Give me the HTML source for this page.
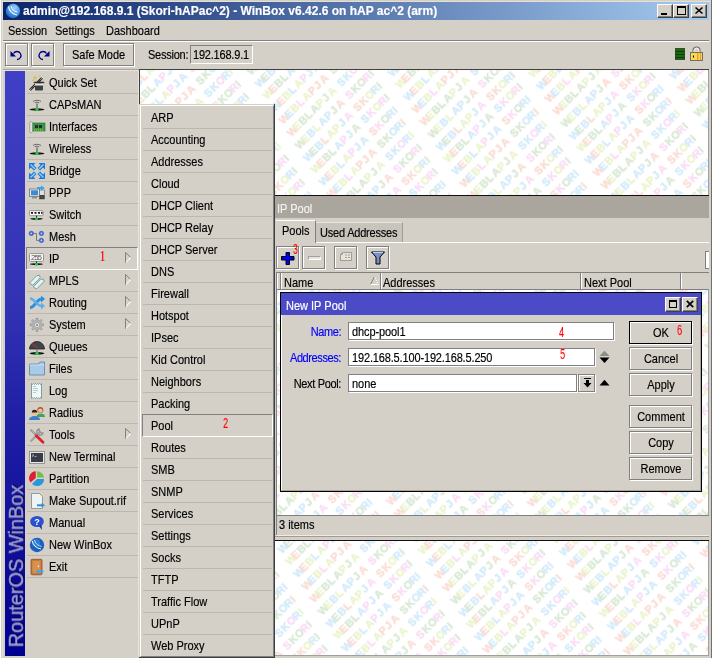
<!DOCTYPE html><html><head><meta charset="utf-8"><style>
html,body{margin:0;padding:0}
body{width:712px;height:658px;position:relative;overflow:hidden;background:#d4d0c8;font-family:"Liberation Sans",sans-serif;font-size:11px;color:#000}
.t{position:absolute;white-space:nowrap;line-height:13px;will-change:transform;-webkit-text-stroke:0.15px currentColor;transform-origin:0 2.4px;transform:scaleY(1.12)}
svg{position:absolute;overflow:visible}
</style></head><body>
<div style="position:absolute;left:0px;top:0px;width:1px;height:658px;background:#fff"></div>
<div style="position:absolute;left:2px;top:1px;width:709px;height:1px;background:#e4e0d4"></div>
<div style="position:absolute;left:2px;top:1px;width:1px;height:657px;background:#e4e0d4"></div>
<div style="position:absolute;left:711px;top:0px;width:1px;height:658px;background:#707070"></div>
<div style="position:absolute;left:3px;top:2px;width:706px;height:18px;background:linear-gradient(to right,#0a246a,#a6caf0)"></div>
<svg style="left:5px;top:3px" width="16" height="16" viewBox="0 0 16 16"><defs><radialGradient id="lg" cx="0.6" cy="0.3" r="0.8"><stop offset="0" stop-color="#9fd0ff"/><stop offset="0.6" stop-color="#3a8ee0"/><stop offset="1" stop-color="#1a5cb0"/></radialGradient></defs><circle cx="8" cy="8" r="7.2" fill="url(#lg)"/><path d="M3.5 3.5 Q4.5 10 12 12" stroke="#fff" stroke-width="1.2" fill="none"/><path d="M6 3 Q7 8 12.5 9.2" stroke="#fff" stroke-width="1" fill="none"/></svg>
<div class="t" style="left:23px;top:3px;color:#fff;font-weight:bold;font-size:12px;line-height:14px">admin@192.168.9.1 (Skori-hAPac^2) - WinBox v6.42.6 on hAP ac^2 (arm)</div>
<div style="position:absolute;left:657px;top:4px;width:16px;height:14px;box-sizing:border-box;background:#d4d0c8;border-top:1px solid #fff;border-left:1px solid #fff;border-right:1px solid #404040;border-bottom:1px solid #404040;box-shadow:inset -1px -1px 0 #808080"></div>
<div style="position:absolute;left:673px;top:4px;width:16px;height:14px;box-sizing:border-box;background:#d4d0c8;border-top:1px solid #fff;border-left:1px solid #fff;border-right:1px solid #404040;border-bottom:1px solid #404040;box-shadow:inset -1px -1px 0 #808080"></div>
<div style="position:absolute;left:691px;top:4px;width:16px;height:14px;box-sizing:border-box;background:#d4d0c8;border-top:1px solid #fff;border-left:1px solid #fff;border-right:1px solid #404040;border-bottom:1px solid #404040;box-shadow:inset -1px -1px 0 #808080"></div>
<div style="position:absolute;left:661px;top:13px;width:6px;height:2px;background:#000"></div>
<div style="position:absolute;left:677px;top:6px;width:9px;height:9px;box-sizing:border-box;border:1px solid #000;border-top-width:2px"></div>
<svg style="left:695px;top:7px" width="8" height="7" viewBox="0 0 8 7"><path d="M0.5 0.5 L7.5 6.5 M7.5 0.5 L0.5 6.5" stroke="#000" stroke-width="1.6"/></svg>
<div class="t" style="left:8px;top:24px;">Session</div>
<div class="t" style="left:55px;top:24px;">Settings</div>
<div class="t" style="left:106px;top:24px;">Dashboard</div>
<div style="position:absolute;left:3px;top:40px;width:706px;height:1px;background:#808080"></div>
<div style="position:absolute;left:3px;top:41px;width:706px;height:1px;background:#fff"></div>
<div style="position:absolute;left:6px;top:44px;width:23px;height:23px;border:1px solid #fff;box-sizing:border-box;"></div>
<div style="position:absolute;left:5px;top:43px;width:23px;height:23px;border:1px solid #808080;box-sizing:border-box;"></div>
<div style="position:absolute;left:32px;top:44px;width:23px;height:23px;border:1px solid #fff;box-sizing:border-box;"></div>
<div style="position:absolute;left:31px;top:43px;width:23px;height:23px;border:1px solid #808080;box-sizing:border-box;"></div>
<svg style="left:10px;top:49px" width="14" height="12" viewBox="0 0 14 12"><path d="M3.5 4.5 A4 4 0 1 1 7 10.5" stroke="#00008c" stroke-width="1.3" fill="none"/><path d="M0.5 2 L0.5 7.5 L6 7.5 Z" fill="#00008c"/></svg>
<svg style="left:36px;top:49px" width="14" height="12" viewBox="0 0 14 12"><path d="M10.5 4.5 A4 4 0 1 0 7 10.5" stroke="#00008c" stroke-width="1.3" fill="none"/><path d="M13.5 2 L13.5 7.5 L8 7.5 Z" fill="#00008c"/></svg>
<div style="position:absolute;left:64px;top:44px;width:71px;height:23px;border:1px solid #fff;box-sizing:border-box;"></div>
<div style="position:absolute;left:63px;top:43px;width:71px;height:23px;border:1px solid #808080;box-sizing:border-box;"></div>
<div class="t" style="left:72px;top:48px;">Safe Mode</div>
<div class="t" style="left:148px;top:48px;letter-spacing:-0.25px">Session:</div>
<div style="position:absolute;left:190px;top:45px;width:63px;height:19px;box-sizing:border-box;border-top:1px solid #808080;border-left:1px solid #808080;border-right:1px solid #fff;border-bottom:1px solid #fff;"></div>
<div class="t" style="left:193px;top:48px;letter-spacing:-0.2px">192.168.9.1</div>
<div style="position:absolute;left:675px;top:48px;width:10px;height:12px;background:#1e6414;box-shadow:inset 0 0 0 1px #2a5a1a"></div>
<div style="position:absolute;left:675px;top:51px;width:10px;height:1px;background:#0d3d08"></div>
<div style="position:absolute;left:675px;top:54px;width:10px;height:1px;background:#0d3d08"></div>
<div style="position:absolute;left:675px;top:57px;width:10px;height:1px;background:#0d3d08"></div>
<svg style="left:690px;top:46px" width="13" height="15" viewBox="0 0 13 15"><path d="M3 7 V4.5 A3.5 3.5 0 0 1 10 4.5 V7" stroke="#707070" stroke-width="1.2" fill="none"/><path d="M4 7 V4.8 A2.5 2.5 0 0 1 9 4.8 V7" stroke="#fff" stroke-width="0.8" fill="none"/><rect x="0.5" y="6.5" width="12" height="8" fill="#ffd84a" stroke="#707070"/><rect x="7" y="7" width="1.5" height="7" fill="#f0a030"/><rect x="10" y="7" width="1.2" height="7" fill="#f0a030"/><rect x="3" y="9.5" width="1" height="2" fill="#000"/></svg>
<div style="position:absolute;left:3px;top:69px;width:136px;height:1px;background:#a8a49c"></div>
<div style="position:absolute;left:3px;top:70px;width:136px;height:1px;background:#e8e4dc"></div>
<div style="position:absolute;left:5px;top:71px;width:20px;height:585px;background:linear-gradient(to bottom,#4040c6 0%,#3232b4 40%,#1a1aa2 65%,#000090 100%)"></div>
<div class="t" style="left:16px;top:566px;transform-origin:50% 50%;transform:translate(-50%,-50%) rotate(-90deg);font-size:19.9px;line-height:20px;color:#9898cc;-webkit-text-stroke:0.5px #9898cc;text-shadow:1px 1px 1px #000040">RouterOS WinBox</div>
<div style="position:absolute;left:27px;top:93px;width:111px;height:1px;background:#bcb8b0"></div>
<div class="t" style="left:49px;top:76px;">Quick Set</div>
<div style="position:absolute;left:27px;top:115px;width:111px;height:1px;background:#bcb8b0"></div>
<div class="t" style="left:49px;top:98px;">CAPsMAN</div>
<div style="position:absolute;left:27px;top:137px;width:111px;height:1px;background:#bcb8b0"></div>
<div class="t" style="left:49px;top:120px;">Interfaces</div>
<div style="position:absolute;left:27px;top:159px;width:111px;height:1px;background:#bcb8b0"></div>
<div class="t" style="left:49px;top:142px;">Wireless</div>
<div style="position:absolute;left:27px;top:181px;width:111px;height:1px;background:#bcb8b0"></div>
<div class="t" style="left:49px;top:164px;">Bridge</div>
<div style="position:absolute;left:27px;top:203px;width:111px;height:1px;background:#bcb8b0"></div>
<div class="t" style="left:49px;top:186px;">PPP</div>
<div style="position:absolute;left:27px;top:225px;width:111px;height:1px;background:#bcb8b0"></div>
<div class="t" style="left:49px;top:208px;">Switch</div>
<div style="position:absolute;left:27px;top:247px;width:111px;height:1px;background:#bcb8b0"></div>
<div class="t" style="left:49px;top:230px;">Mesh</div>
<div style="position:absolute;left:26px;top:247px;width:112px;height:23px;box-sizing:border-box;border-top:1px solid #808080;border-left:1px solid #808080;border-right:1px solid #fff;border-bottom:1px solid #fff"></div>
<div class="t" style="left:49px;top:252px;">IP</div>
<svg style="left:125px;top:252px" width="7" height="11" viewBox="0 0 7 11"><path d="M0.5 0.5 L5.8 5.5 L0.5 10.5 Z" fill="#d4d0c8" stroke="#808080" stroke-width="1"/><path d="M1 10.3 L5.8 5.5" stroke="#fff" stroke-width="1.1"/></svg>
<div style="position:absolute;left:27px;top:291px;width:111px;height:1px;background:#bcb8b0"></div>
<div class="t" style="left:49px;top:274px;">MPLS</div>
<svg style="left:125px;top:274px" width="7" height="11" viewBox="0 0 7 11"><path d="M0.5 0.5 L5.8 5.5 L0.5 10.5 Z" fill="#d4d0c8" stroke="#808080" stroke-width="1"/><path d="M1 10.3 L5.8 5.5" stroke="#fff" stroke-width="1.1"/></svg>
<div style="position:absolute;left:27px;top:313px;width:111px;height:1px;background:#bcb8b0"></div>
<div class="t" style="left:49px;top:296px;">Routing</div>
<svg style="left:125px;top:296px" width="7" height="11" viewBox="0 0 7 11"><path d="M0.5 0.5 L5.8 5.5 L0.5 10.5 Z" fill="#d4d0c8" stroke="#808080" stroke-width="1"/><path d="M1 10.3 L5.8 5.5" stroke="#fff" stroke-width="1.1"/></svg>
<div style="position:absolute;left:27px;top:335px;width:111px;height:1px;background:#bcb8b0"></div>
<div class="t" style="left:49px;top:318px;">System</div>
<svg style="left:125px;top:318px" width="7" height="11" viewBox="0 0 7 11"><path d="M0.5 0.5 L5.8 5.5 L0.5 10.5 Z" fill="#d4d0c8" stroke="#808080" stroke-width="1"/><path d="M1 10.3 L5.8 5.5" stroke="#fff" stroke-width="1.1"/></svg>
<div style="position:absolute;left:27px;top:357px;width:111px;height:1px;background:#bcb8b0"></div>
<div class="t" style="left:49px;top:340px;">Queues</div>
<div style="position:absolute;left:27px;top:379px;width:111px;height:1px;background:#bcb8b0"></div>
<div class="t" style="left:49px;top:362px;">Files</div>
<div style="position:absolute;left:27px;top:401px;width:111px;height:1px;background:#bcb8b0"></div>
<div class="t" style="left:49px;top:384px;">Log</div>
<div style="position:absolute;left:27px;top:423px;width:111px;height:1px;background:#bcb8b0"></div>
<div class="t" style="left:49px;top:406px;">Radius</div>
<div style="position:absolute;left:27px;top:445px;width:111px;height:1px;background:#bcb8b0"></div>
<div class="t" style="left:49px;top:428px;">Tools</div>
<svg style="left:125px;top:428px" width="7" height="11" viewBox="0 0 7 11"><path d="M0.5 0.5 L5.8 5.5 L0.5 10.5 Z" fill="#d4d0c8" stroke="#808080" stroke-width="1"/><path d="M1 10.3 L5.8 5.5" stroke="#fff" stroke-width="1.1"/></svg>
<div style="position:absolute;left:27px;top:467px;width:111px;height:1px;background:#bcb8b0"></div>
<div class="t" style="left:49px;top:450px;">New Terminal</div>
<div style="position:absolute;left:27px;top:489px;width:111px;height:1px;background:#bcb8b0"></div>
<div class="t" style="left:49px;top:472px;">Partition</div>
<div style="position:absolute;left:27px;top:511px;width:111px;height:1px;background:#bcb8b0"></div>
<div class="t" style="left:49px;top:494px;">Make Supout.rif</div>
<div style="position:absolute;left:27px;top:533px;width:111px;height:1px;background:#bcb8b0"></div>
<div class="t" style="left:49px;top:516px;">Manual</div>
<div style="position:absolute;left:27px;top:555px;width:111px;height:1px;background:#bcb8b0"></div>
<div class="t" style="left:49px;top:538px;">New WinBox</div>
<div style="position:absolute;left:27px;top:577px;width:111px;height:1px;background:#bcb8b0"></div>
<div class="t" style="left:49px;top:560px;">Exit</div>
<div class="t" style="left:100px;top:250px;color:#f00;font-family:'Liberation Serif';font-size:14px;line-height:14px;transform:scaleX(0.72);transform-origin:left top;-webkit-text-stroke:0.2px #f00">1</div>
<svg style="left:29px;top:75px" width="16" height="16" viewBox="0 0 16 16"><path d="M1 15 L13 3" stroke="#202020" stroke-width="2.4"/><path d="M1 15 L13 3" stroke="#fff" stroke-width="0.8" stroke-dasharray="1 1"/><rect x="6" y="7.5" width="8" height="8" rx="1" fill="#404040"/><rect x="6" y="7.5" width="8" height="3" fill="#e8e8e8"/><ellipse cx="10" cy="7.5" rx="5.5" ry="0.9" fill="#303030"/><path d="M6 0.5 L6.8 2.2 L8.5 2.5 L6.8 3 L6 4.8 L5.2 3 L3.5 2.5 L5.2 2.2Z" fill="#e0b820"/><circle cx="4.3" cy="5.2" r="1" fill="#e0c030"/><circle cx="10.5" cy="0.8" r="0.7" fill="#e0c030"/><circle cx="14.5" cy="5" r="0.7" fill="#e0c030"/></svg>
<svg style="left:29px;top:97px" width="16" height="16" viewBox="0 0 16 16"><path d="M4 4.5 A5 3 0 0 1 12 4.5" stroke="#606060" stroke-width="0.9" fill="none"/><path d="M5.8 5.8 A3 1.8 0 0 1 10.2 5.8" stroke="#606060" stroke-width="0.9" fill="none"/><rect x="7.3" y="6.5" width="1.4" height="6" fill="#707070"/><ellipse cx="8" cy="12.5" rx="7.5" ry="1.2" fill="#101010"/><circle cx="8" cy="12.5" r="1.7" fill="#1ed040"/></svg>
<svg style="left:29px;top:119px" width="16" height="16" viewBox="0 0 16 16"><rect x="3.5" y="4" width="12.5" height="8" fill="#30a040" stroke="#1a7028" stroke-width="0.6"/><rect x="6" y="6" width="3" height="3" fill="#302838"/><rect x="10" y="6" width="3" height="3" fill="#302838"/><path d="M5 11 h9" stroke="#e8c040" stroke-width="1.2" stroke-dasharray="1 1"/><rect x="0.8" y="2.6" width="2.6" height="11" rx="1" fill="#e8e8e8" stroke="#808080" stroke-width="0.6"/></svg>
<svg style="left:29px;top:141px" width="16" height="16" viewBox="0 0 16 16"><path d="M4 4.5 A5 3 0 0 1 12 4.5" stroke="#606060" stroke-width="0.9" fill="none"/><path d="M5.8 5.8 A3 1.8 0 0 1 10.2 5.8" stroke="#606060" stroke-width="0.9" fill="none"/><rect x="7.3" y="6.5" width="1.4" height="6" fill="#707070"/><ellipse cx="8" cy="12.5" rx="7.5" ry="1.2" fill="#101010"/><circle cx="8" cy="12.5" r="1.7" fill="#1ed040"/></svg>
<svg style="left:29px;top:163px" width="16" height="16" viewBox="0 0 16 16"><g stroke="#1a7ad8" stroke-width="3.6" stroke-linecap="butt"><path d="M2 2 L6.2 6.2 M14 2 L9.8 6.2 M2 14 L6.2 9.8 M14 14 L9.8 9.8"/></g><g fill="#1a7ad8"><path d="M0 0 h6.5 l-6.5 6.5z M16 0 h-6.5 l6.5 6.5z M0 16 h6.5 l-6.5 -6.5z M16 16 h-6.5 l6.5 -6.5z"/></g><g stroke="#8fd8ff" stroke-width="1.3"><path d="M1.5 1.5 L5.8 5.8 M14.5 1.5 L10.2 5.8 M1.5 14.5 L5.8 10.2 M14.5 14.5 L10.2 10.2"/></g></svg>
<svg style="left:29px;top:185px" width="16" height="16" viewBox="0 0 16 16"><rect x="0.5" y="4" width="10" height="7.5" fill="#e8e8e8" stroke="#707070" stroke-width="0.8"/><rect x="2" y="5.3" width="7" height="5" fill="#3a8ad8"/><rect x="3" y="12" width="5" height="1.5" fill="#909090"/><rect x="10.5" y="5" width="5" height="9" fill="#e0e0e0" stroke="#606060" stroke-width="0.6"/><rect x="10.5" y="10" width="5" height="4" fill="#404040"/><circle cx="13" cy="12" r="0.6" fill="#20d040"/><path d="M8 3 h5" stroke="#3aa0f0" stroke-width="2"/><path d="M12 0.5 L15.8 3 L12 5.5z" fill="#3aa0f0"/></svg>
<svg style="left:29px;top:207px" width="16" height="16" viewBox="0 0 16 16"><rect x="0.5" y="3.7" width="13.6" height="5" rx="1" fill="#f8f8f8" stroke="#808080" stroke-width="0.8"/><g fill="#202020"><rect x="2" y="5" width="2" height="1.8"/><rect x="5.5" y="5" width="2" height="1.8"/><rect x="9" y="5" width="2" height="1.8"/><rect x="12" y="5" width="1.5" height="1.8"/></g><rect x="7" y="8.7" width="1" height="3" fill="#202020"/><ellipse cx="7.5" cy="11.8" rx="6.5" ry="0.9" fill="#101010"/><circle cx="7.5" cy="11.8" r="1.5" fill="#1ed040"/></svg>
<svg style="left:29px;top:229px" width="16" height="16" viewBox="0 0 16 16"><path d="M4 4.4 H7.5 V11.4 H10" stroke="#707070" stroke-width="0.9" fill="none"/><g fill="#3a6ee0" stroke="#2040b0" stroke-width="0.5"><circle cx="2.3" cy="4.4" r="2.2"/><circle cx="12.4" cy="4.4" r="2.2"/><circle cx="12.4" cy="11.4" r="2.2"/></g><g fill="#b8d0ff"><circle cx="2.3" cy="4.4" r="0.9"/><circle cx="12.4" cy="4.4" r="0.9"/><circle cx="12.4" cy="11.4" r="0.9"/></g></svg>
<svg style="left:29px;top:251px" width="16" height="16" viewBox="0 0 16 16"><rect x="0.5" y="2.6" width="14" height="7.8" rx="1" fill="#f8f8f8" stroke="#808080" stroke-width="0.8"/><text x="7.5" y="9.2" font-family="Liberation Sans" font-size="7.5" fill="#505050" text-anchor="middle" textLength="11">255</text><rect x="7" y="10.4" width="1" height="2.5" fill="#202020"/><ellipse cx="7.5" cy="13.2" rx="6.5" ry="0.9" fill="#101010"/><circle cx="7.5" cy="13.2" r="1.5" fill="#1ed040"/></svg>
<svg style="left:29px;top:273px" width="16" height="16" viewBox="0 0 16 16"><path d="M0.5 10 L8 2.5 L10.5 2.3 L11.2 4.8 L3.7 12.3Z" fill="#e0f4f4" stroke="#6a8a88" stroke-width="0.8"/><path d="M4.3 13.8 L11.8 6.3 L14.3 6.1 L15 8.6 L7.5 16.1Z" fill="#e0f4f4" stroke="#6a8a88" stroke-width="0.8"/></svg>
<svg style="left:29px;top:295px" width="16" height="16" viewBox="0 0 16 16"><path d="M1 12.5 C6 12.5 7 4 13 4" stroke="#2a90e0" stroke-width="3" fill="none"/><path d="M12 0.5 L16 4 L12 7.5z" fill="#2a90e0"/><path d="M1 3.5 C6 3.5 7 11 13 11" stroke="#5ab0f0" stroke-width="2.6" fill="none"/><path d="M12 7.5 L16 11 L12 14.5z" fill="#5ab0f0"/></svg>
<svg style="left:29px;top:317px" width="16" height="16" viewBox="0 0 16 16"><g fill="#b8b8b8" stroke="#888" stroke-width="0.6"><path d="M7 1.3h2v2.2l1.3.6 1.6-1.6 1.4 1.4-1.6 1.6.6 1.3h2.2v2h-2.2l-.6 1.3 1.6 1.6-1.4 1.4-1.6-1.6-1.3.6v2.2h-2v-2.2l-1.3-.6-1.6 1.6-1.4-1.4 1.6-1.6-.6-1.3H1.2v-2h2.2l.6-1.3-1.6-1.6 1.4-1.4 1.6 1.6 1.3-.6z"/></g><circle cx="8" cy="8" r="2.6" fill="#e8e8e8" stroke="#888" stroke-width="0.6"/><circle cx="8" cy="8" r="1.1" fill="#808080"/></svg>
<svg style="left:29px;top:339px" width="16" height="16" viewBox="0 0 16 16"><path d="M0.5 10 A7.5 7.5 0 0 1 15.5 10 Z" fill="#404450" stroke="#202020" stroke-width="0.8"/><path d="M3.3 4.4 L10 10.4" stroke="#e02020" stroke-width="1"/><rect x="7.3" y="10.5" width="1.4" height="3" fill="#808080"/><ellipse cx="8" cy="14.3" rx="7.5" ry="1.2" fill="#101010"/><circle cx="8" cy="14.3" r="1.7" fill="#1ed040"/></svg>
<svg style="left:29px;top:361px" width="16" height="16" viewBox="0 0 16 16"><path d="M0.5 3 h9 l1.5 -2 h4.5 v13 h-15z" fill="#a8cce8" stroke="#5a7ea8" stroke-width="0.8"/><path d="M0.5 4 h15" stroke="#d0e4f4" stroke-width="0.8"/></svg>
<svg style="left:29px;top:383px" width="16" height="16" viewBox="0 0 16 16"><path d="M2.5 0.5 l1 1 1-1 1 1 1-1 1 1 1-1 1 1 1-1 1 1 1-1 V15.5 l-1-1-1 1-1-1-1 1-1-1-1 1-1-1-1 1-1-1-1 1z" fill="#eef8f8" stroke="#708888" stroke-width="0.8"/><g stroke="#a8c0c8" stroke-width="0.8"><path d="M4 3.5h3M4 5.5h5M4 7.5h5M4 9.5h3"/></g></svg>
<svg style="left:29px;top:405px" width="16" height="16" viewBox="0 0 16 16"><path d="M7.5 11.5 a4.3 3.5 0 0 1 8.5 0 v0.5 h-8.5z" fill="#38a860"/><circle cx="11.3" cy="5" r="3" fill="#b05020"/><circle cx="11.3" cy="5.6" r="2.2" fill="#f0c090"/><path d="M0 15 a5.5 4 0 0 1 11 0z" fill="#3a80d0"/><circle cx="5.5" cy="8" r="2.7" fill="#f0c090"/><path d="M2.8 7.5 a2.7 2.7 0 0 1 5.4 0 z" fill="#302020"/></svg>
<svg style="left:29px;top:427px" width="16" height="16" viewBox="0 0 16 16"><path d="M1.5 2.5 L13.5 14.5" stroke="#909090" stroke-width="2"/><path d="M1.5 2.5 L13.5 14.5" stroke="#fff" stroke-width="0.6" stroke-dasharray="1 1"/><path d="M1.5 14.5 L11.5 4.5" stroke="#a0a0a0" stroke-width="2.2"/><path d="M10 2 a3.2 3.2 0 1 0 4 4 l-2 -0.3 -1.7 -1.7z" fill="none" stroke="#909090" stroke-width="1.4"/><path d="M7.2 8.8 L14 15.2" stroke="#e02030" stroke-width="2.8" stroke-linecap="round"/></svg>
<svg style="left:29px;top:449px" width="16" height="16" viewBox="0 0 16 16"><rect x="0.5" y="2.5" width="15" height="12" fill="#e8e8e8" stroke="#808080" stroke-width="0.8"/><rect x="2" y="4" width="12" height="9" fill="#3a3c48"/><path d="M3 5.5 L5 6.5 L3 7.5 M5.5 7.5 h2" stroke="#d0d0d0" stroke-width="0.7" fill="none"/></svg>
<svg style="left:29px;top:471px" width="16" height="16" viewBox="0 0 16 16"><path d="M6.8 0.3 V7 L1.5 11.5 A7 7 0 0 1 6.8 0.3z" fill="#e02030"/><path d="M8.2 0.3 A7 7 0 0 1 15 6.5 H8.2z" fill="#70c040"/><path d="M15 8 A7 6.5 0 0 1 3 13 L8 8z" fill="#2a98d8"/></svg>
<svg style="left:29px;top:493px" width="16" height="16" viewBox="0 0 16 16"><path d="M2.5 0.5 h8 l3 3 V15.5 h-11z" fill="#eef4f4" stroke="#808888" stroke-width="0.8"/><path d="M8 12.3 h5" stroke="#2a90e0" stroke-width="2"/><path d="M12.5 10 L16 12.3 L12.5 14.6z" fill="#2a90e0"/></svg>
<svg style="left:29px;top:515px" width="16" height="16" viewBox="0 0 16 16"><ellipse cx="8" cy="6.5" rx="6.8" ry="5.5" fill="#2a50d0"/><path d="M10 11 L13 15 L12.5 10z" fill="#1a30a0"/><text x="8" y="10" font-family="Liberation Sans" font-size="9" font-weight="bold" fill="#fff" text-anchor="middle">?</text></svg>
<svg style="left:29px;top:537px" width="16" height="16" viewBox="0 0 16 16"><circle cx="8" cy="8" r="7.2" fill="#1a60c0"/><circle cx="7" cy="6" r="4" fill="#3a90e0" opacity="0.6"/><path d="M3.2 3.8 Q4.5 10.5 12 12" stroke="#fff" stroke-width="1" fill="none"/><path d="M5.5 3 Q6.8 8.5 12.6 9.4" stroke="#e8f0ff" stroke-width="0.8" fill="none"/></svg>
<svg style="left:29px;top:559px" width="16" height="16" viewBox="0 0 16 16"><rect x="2" y="0.3" width="11" height="15.5" rx="1" fill="#c87838" stroke="#8a4018" stroke-width="0.7"/><rect x="3.5" y="2" width="8" height="12" fill="#d89050"/><circle cx="9.4" cy="7.2" r="0.8" fill="#fff"/><path d="M9 12.5 h5.5" stroke="#3aa8f0" stroke-width="2"/><path d="M10 10 L6.8 12.5 L10 15z" fill="#3aa8f0"/></svg>
<svg style="left:140px;top:70px;font-family:Liberation Sans;font-weight:bold;font-size:11px" width="568" height="585" viewBox="140 70 568 585"><defs><pattern id="wm" patternUnits="userSpaceOnUse" width="120" height="86.4" patternTransform="rotate(-45) translate(3 5) skewX(-12)"><g transform="translate(0 10.0) skewX(12)"><text x="-120.0" fill="#fadcd4" stroke="#fadcd4" stroke-width="0.3">S</text><text x="-111.8" fill="#fadcf6" stroke="#fadcf6" stroke-width="0.3">K</text><text x="-103.6" fill="#d8e8d4" stroke="#d8e8d4" stroke-width="0.3">O</text><text x="-95.4" fill="#d2eafa" stroke="#d2eafa" stroke-width="0.3">R</text><text x="-87.2" fill="#d2eafa" stroke="#d2eafa" stroke-width="0.3">I</text><text x="-70.8" fill="#d2eafa" stroke="#d2eafa" stroke-width="0.3">W</text><text x="-62.6" fill="#fadcd4" stroke="#fadcd4" stroke-width="0.3">E</text><text x="-54.4" fill="#eaf4cc" stroke="#eaf4cc" stroke-width="0.3">B</text><text x="-46.2" fill="#d2eafa" stroke="#d2eafa" stroke-width="0.3">L</text><text x="-38.0" fill="#eaf4cc" stroke="#eaf4cc" stroke-width="0.3">A</text><text x="-29.8" fill="#fadcf6" stroke="#fadcf6" stroke-width="0.3">P</text><text x="-21.6" fill="#d2eafa" stroke="#d2eafa" stroke-width="0.3">J</text><text x="-13.4" fill="#d2eafa" stroke="#d2eafa" stroke-width="0.3">A</text><text x="0.0" fill="#fadcd4" stroke="#fadcd4" stroke-width="0.3">S</text><text x="8.2" fill="#fadcf6" stroke="#fadcf6" stroke-width="0.3">K</text><text x="16.4" fill="#d8e8d4" stroke="#d8e8d4" stroke-width="0.3">O</text><text x="24.6" fill="#d2eafa" stroke="#d2eafa" stroke-width="0.3">R</text><text x="32.8" fill="#d2eafa" stroke="#d2eafa" stroke-width="0.3">I</text><text x="49.2" fill="#d2eafa" stroke="#d2eafa" stroke-width="0.3">W</text><text x="57.4" fill="#fadcd4" stroke="#fadcd4" stroke-width="0.3">E</text><text x="65.6" fill="#eaf4cc" stroke="#eaf4cc" stroke-width="0.3">B</text><text x="73.8" fill="#d2eafa" stroke="#d2eafa" stroke-width="0.3">L</text><text x="82.0" fill="#eaf4cc" stroke="#eaf4cc" stroke-width="0.3">A</text><text x="90.2" fill="#fadcf6" stroke="#fadcf6" stroke-width="0.3">P</text><text x="98.4" fill="#d2eafa" stroke="#d2eafa" stroke-width="0.3">J</text><text x="106.6" fill="#d2eafa" stroke="#d2eafa" stroke-width="0.3">A</text><text x="120.0" fill="#fadcd4" stroke="#fadcd4" stroke-width="0.3">S</text><text x="128.2" fill="#fadcf6" stroke="#fadcf6" stroke-width="0.3">K</text><text x="136.4" fill="#d8e8d4" stroke="#d8e8d4" stroke-width="0.3">O</text><text x="144.6" fill="#d2eafa" stroke="#d2eafa" stroke-width="0.3">R</text><text x="152.8" fill="#d2eafa" stroke="#d2eafa" stroke-width="0.3">I</text><text x="169.2" fill="#d2eafa" stroke="#d2eafa" stroke-width="0.3">W</text><text x="177.4" fill="#fadcd4" stroke="#fadcd4" stroke-width="0.3">E</text><text x="185.6" fill="#eaf4cc" stroke="#eaf4cc" stroke-width="0.3">B</text><text x="193.8" fill="#d2eafa" stroke="#d2eafa" stroke-width="0.3">L</text><text x="202.0" fill="#eaf4cc" stroke="#eaf4cc" stroke-width="0.3">A</text><text x="210.2" fill="#fadcf6" stroke="#fadcf6" stroke-width="0.3">P</text><text x="218.4" fill="#d2eafa" stroke="#d2eafa" stroke-width="0.3">J</text><text x="226.6" fill="#d2eafa" stroke="#d2eafa" stroke-width="0.3">A</text></g><g transform="translate(0 24.4) skewX(12)"><text x="-120.0" fill="#d8e8d4" stroke="#d8e8d4" stroke-width="0.3">S</text><text x="-111.8" fill="#d8e8d4" stroke="#d8e8d4" stroke-width="0.3">K</text><text x="-103.6" fill="#d2eafa" stroke="#d2eafa" stroke-width="0.3">O</text><text x="-95.4" fill="#d2eafa" stroke="#d2eafa" stroke-width="0.3">R</text><text x="-87.2" fill="#fadcd4" stroke="#fadcd4" stroke-width="0.3">I</text><text x="-70.8" fill="#fadcd4" stroke="#fadcd4" stroke-width="0.3">W</text><text x="-62.6" fill="#d2eafa" stroke="#d2eafa" stroke-width="0.3">E</text><text x="-54.4" fill="#eaf4cc" stroke="#eaf4cc" stroke-width="0.3">B</text><text x="-46.2" fill="#fadcf6" stroke="#fadcf6" stroke-width="0.3">L</text><text x="-38.0" fill="#eaf4cc" stroke="#eaf4cc" stroke-width="0.3">A</text><text x="-29.8" fill="#fadcd4" stroke="#fadcd4" stroke-width="0.3">P</text><text x="-21.6" fill="#fadcd4" stroke="#fadcd4" stroke-width="0.3">J</text><text x="-13.4" fill="#fadcd4" stroke="#fadcd4" stroke-width="0.3">A</text><text x="0.0" fill="#d8e8d4" stroke="#d8e8d4" stroke-width="0.3">S</text><text x="8.2" fill="#d8e8d4" stroke="#d8e8d4" stroke-width="0.3">K</text><text x="16.4" fill="#d2eafa" stroke="#d2eafa" stroke-width="0.3">O</text><text x="24.6" fill="#d2eafa" stroke="#d2eafa" stroke-width="0.3">R</text><text x="32.8" fill="#fadcd4" stroke="#fadcd4" stroke-width="0.3">I</text><text x="49.2" fill="#fadcd4" stroke="#fadcd4" stroke-width="0.3">W</text><text x="57.4" fill="#d2eafa" stroke="#d2eafa" stroke-width="0.3">E</text><text x="65.6" fill="#eaf4cc" stroke="#eaf4cc" stroke-width="0.3">B</text><text x="73.8" fill="#fadcf6" stroke="#fadcf6" stroke-width="0.3">L</text><text x="82.0" fill="#eaf4cc" stroke="#eaf4cc" stroke-width="0.3">A</text><text x="90.2" fill="#fadcd4" stroke="#fadcd4" stroke-width="0.3">P</text><text x="98.4" fill="#fadcd4" stroke="#fadcd4" stroke-width="0.3">J</text><text x="106.6" fill="#fadcd4" stroke="#fadcd4" stroke-width="0.3">A</text><text x="120.0" fill="#d8e8d4" stroke="#d8e8d4" stroke-width="0.3">S</text><text x="128.2" fill="#d8e8d4" stroke="#d8e8d4" stroke-width="0.3">K</text><text x="136.4" fill="#d2eafa" stroke="#d2eafa" stroke-width="0.3">O</text><text x="144.6" fill="#d2eafa" stroke="#d2eafa" stroke-width="0.3">R</text><text x="152.8" fill="#fadcd4" stroke="#fadcd4" stroke-width="0.3">I</text><text x="169.2" fill="#fadcd4" stroke="#fadcd4" stroke-width="0.3">W</text><text x="177.4" fill="#d2eafa" stroke="#d2eafa" stroke-width="0.3">E</text><text x="185.6" fill="#eaf4cc" stroke="#eaf4cc" stroke-width="0.3">B</text><text x="193.8" fill="#fadcf6" stroke="#fadcf6" stroke-width="0.3">L</text><text x="202.0" fill="#eaf4cc" stroke="#eaf4cc" stroke-width="0.3">A</text><text x="210.2" fill="#fadcd4" stroke="#fadcd4" stroke-width="0.3">P</text><text x="218.4" fill="#fadcd4" stroke="#fadcd4" stroke-width="0.3">J</text><text x="226.6" fill="#fadcd4" stroke="#fadcd4" stroke-width="0.3">A</text></g><g transform="translate(0 38.8) skewX(12)"><text x="-120.0" fill="#d2eafa" stroke="#d2eafa" stroke-width="0.3">S</text><text x="-111.8" fill="#d2eafa" stroke="#d2eafa" stroke-width="0.3">K</text><text x="-103.6" fill="#fadcf6" stroke="#fadcf6" stroke-width="0.3">O</text><text x="-95.4" fill="#d2eafa" stroke="#d2eafa" stroke-width="0.3">R</text><text x="-87.2" fill="#eaf4cc" stroke="#eaf4cc" stroke-width="0.3">I</text><text x="-70.8" fill="#fadcd4" stroke="#fadcd4" stroke-width="0.3">W</text><text x="-62.6" fill="#eaf4cc" stroke="#eaf4cc" stroke-width="0.3">E</text><text x="-54.4" fill="#d8e8d4" stroke="#d8e8d4" stroke-width="0.3">B</text><text x="-46.2" fill="#d8e8d4" stroke="#d8e8d4" stroke-width="0.3">L</text><text x="-38.0" fill="#d8e8d4" stroke="#d8e8d4" stroke-width="0.3">A</text><text x="-29.8" fill="#eaf4cc" stroke="#eaf4cc" stroke-width="0.3">P</text><text x="-21.6" fill="#d8e8d4" stroke="#d8e8d4" stroke-width="0.3">J</text><text x="-13.4" fill="#eaf4cc" stroke="#eaf4cc" stroke-width="0.3">A</text><text x="0.0" fill="#d2eafa" stroke="#d2eafa" stroke-width="0.3">S</text><text x="8.2" fill="#d2eafa" stroke="#d2eafa" stroke-width="0.3">K</text><text x="16.4" fill="#fadcf6" stroke="#fadcf6" stroke-width="0.3">O</text><text x="24.6" fill="#d2eafa" stroke="#d2eafa" stroke-width="0.3">R</text><text x="32.8" fill="#eaf4cc" stroke="#eaf4cc" stroke-width="0.3">I</text><text x="49.2" fill="#fadcd4" stroke="#fadcd4" stroke-width="0.3">W</text><text x="57.4" fill="#eaf4cc" stroke="#eaf4cc" stroke-width="0.3">E</text><text x="65.6" fill="#d8e8d4" stroke="#d8e8d4" stroke-width="0.3">B</text><text x="73.8" fill="#d8e8d4" stroke="#d8e8d4" stroke-width="0.3">L</text><text x="82.0" fill="#d8e8d4" stroke="#d8e8d4" stroke-width="0.3">A</text><text x="90.2" fill="#eaf4cc" stroke="#eaf4cc" stroke-width="0.3">P</text><text x="98.4" fill="#d8e8d4" stroke="#d8e8d4" stroke-width="0.3">J</text><text x="106.6" fill="#eaf4cc" stroke="#eaf4cc" stroke-width="0.3">A</text><text x="120.0" fill="#d2eafa" stroke="#d2eafa" stroke-width="0.3">S</text><text x="128.2" fill="#d2eafa" stroke="#d2eafa" stroke-width="0.3">K</text><text x="136.4" fill="#fadcf6" stroke="#fadcf6" stroke-width="0.3">O</text><text x="144.6" fill="#d2eafa" stroke="#d2eafa" stroke-width="0.3">R</text><text x="152.8" fill="#eaf4cc" stroke="#eaf4cc" stroke-width="0.3">I</text><text x="169.2" fill="#fadcd4" stroke="#fadcd4" stroke-width="0.3">W</text><text x="177.4" fill="#eaf4cc" stroke="#eaf4cc" stroke-width="0.3">E</text><text x="185.6" fill="#d8e8d4" stroke="#d8e8d4" stroke-width="0.3">B</text><text x="193.8" fill="#d8e8d4" stroke="#d8e8d4" stroke-width="0.3">L</text><text x="202.0" fill="#d8e8d4" stroke="#d8e8d4" stroke-width="0.3">A</text><text x="210.2" fill="#eaf4cc" stroke="#eaf4cc" stroke-width="0.3">P</text><text x="218.4" fill="#d8e8d4" stroke="#d8e8d4" stroke-width="0.3">J</text><text x="226.6" fill="#eaf4cc" stroke="#eaf4cc" stroke-width="0.3">A</text></g><g transform="translate(0 53.2) skewX(12)"><text x="-120.0" fill="#fadcf6" stroke="#fadcf6" stroke-width="0.3">S</text><text x="-111.8" fill="#d8e8d4" stroke="#d8e8d4" stroke-width="0.3">K</text><text x="-103.6" fill="#d8e8d4" stroke="#d8e8d4" stroke-width="0.3">O</text><text x="-95.4" fill="#fadcf6" stroke="#fadcf6" stroke-width="0.3">R</text><text x="-87.2" fill="#d8e8d4" stroke="#d8e8d4" stroke-width="0.3">I</text><text x="-70.8" fill="#d8e8d4" stroke="#d8e8d4" stroke-width="0.3">W</text><text x="-62.6" fill="#eaf4cc" stroke="#eaf4cc" stroke-width="0.3">E</text><text x="-54.4" fill="#d2eafa" stroke="#d2eafa" stroke-width="0.3">B</text><text x="-46.2" fill="#eaf4cc" stroke="#eaf4cc" stroke-width="0.3">L</text><text x="-38.0" fill="#d2eafa" stroke="#d2eafa" stroke-width="0.3">A</text><text x="-29.8" fill="#d2eafa" stroke="#d2eafa" stroke-width="0.3">P</text><text x="-21.6" fill="#d8e8d4" stroke="#d8e8d4" stroke-width="0.3">J</text><text x="-13.4" fill="#fadcd4" stroke="#fadcd4" stroke-width="0.3">A</text><text x="0.0" fill="#fadcf6" stroke="#fadcf6" stroke-width="0.3">S</text><text x="8.2" fill="#d8e8d4" stroke="#d8e8d4" stroke-width="0.3">K</text><text x="16.4" fill="#d8e8d4" stroke="#d8e8d4" stroke-width="0.3">O</text><text x="24.6" fill="#fadcf6" stroke="#fadcf6" stroke-width="0.3">R</text><text x="32.8" fill="#d8e8d4" stroke="#d8e8d4" stroke-width="0.3">I</text><text x="49.2" fill="#d8e8d4" stroke="#d8e8d4" stroke-width="0.3">W</text><text x="57.4" fill="#eaf4cc" stroke="#eaf4cc" stroke-width="0.3">E</text><text x="65.6" fill="#d2eafa" stroke="#d2eafa" stroke-width="0.3">B</text><text x="73.8" fill="#eaf4cc" stroke="#eaf4cc" stroke-width="0.3">L</text><text x="82.0" fill="#d2eafa" stroke="#d2eafa" stroke-width="0.3">A</text><text x="90.2" fill="#d2eafa" stroke="#d2eafa" stroke-width="0.3">P</text><text x="98.4" fill="#d8e8d4" stroke="#d8e8d4" stroke-width="0.3">J</text><text x="106.6" fill="#fadcd4" stroke="#fadcd4" stroke-width="0.3">A</text><text x="120.0" fill="#fadcf6" stroke="#fadcf6" stroke-width="0.3">S</text><text x="128.2" fill="#d8e8d4" stroke="#d8e8d4" stroke-width="0.3">K</text><text x="136.4" fill="#d8e8d4" stroke="#d8e8d4" stroke-width="0.3">O</text><text x="144.6" fill="#fadcf6" stroke="#fadcf6" stroke-width="0.3">R</text><text x="152.8" fill="#d8e8d4" stroke="#d8e8d4" stroke-width="0.3">I</text><text x="169.2" fill="#d8e8d4" stroke="#d8e8d4" stroke-width="0.3">W</text><text x="177.4" fill="#eaf4cc" stroke="#eaf4cc" stroke-width="0.3">E</text><text x="185.6" fill="#d2eafa" stroke="#d2eafa" stroke-width="0.3">B</text><text x="193.8" fill="#eaf4cc" stroke="#eaf4cc" stroke-width="0.3">L</text><text x="202.0" fill="#d2eafa" stroke="#d2eafa" stroke-width="0.3">A</text><text x="210.2" fill="#d2eafa" stroke="#d2eafa" stroke-width="0.3">P</text><text x="218.4" fill="#d8e8d4" stroke="#d8e8d4" stroke-width="0.3">J</text><text x="226.6" fill="#fadcd4" stroke="#fadcd4" stroke-width="0.3">A</text></g><g transform="translate(0 67.6) skewX(12)"><text x="-120.0" fill="#fadcd4" stroke="#fadcd4" stroke-width="0.3">S</text><text x="-111.8" fill="#fadcd4" stroke="#fadcd4" stroke-width="0.3">K</text><text x="-103.6" fill="#eaf4cc" stroke="#eaf4cc" stroke-width="0.3">O</text><text x="-95.4" fill="#d2eafa" stroke="#d2eafa" stroke-width="0.3">R</text><text x="-87.2" fill="#d8e8d4" stroke="#d8e8d4" stroke-width="0.3">I</text><text x="-70.8" fill="#d2eafa" stroke="#d2eafa" stroke-width="0.3">W</text><text x="-62.6" fill="#d8e8d4" stroke="#d8e8d4" stroke-width="0.3">E</text><text x="-54.4" fill="#d2eafa" stroke="#d2eafa" stroke-width="0.3">B</text><text x="-46.2" fill="#fadcd4" stroke="#fadcd4" stroke-width="0.3">L</text><text x="-38.0" fill="#eaf4cc" stroke="#eaf4cc" stroke-width="0.3">A</text><text x="-29.8" fill="#eaf4cc" stroke="#eaf4cc" stroke-width="0.3">P</text><text x="-21.6" fill="#d2eafa" stroke="#d2eafa" stroke-width="0.3">J</text><text x="-13.4" fill="#fadcf6" stroke="#fadcf6" stroke-width="0.3">A</text><text x="0.0" fill="#fadcd4" stroke="#fadcd4" stroke-width="0.3">S</text><text x="8.2" fill="#fadcd4" stroke="#fadcd4" stroke-width="0.3">K</text><text x="16.4" fill="#eaf4cc" stroke="#eaf4cc" stroke-width="0.3">O</text><text x="24.6" fill="#d2eafa" stroke="#d2eafa" stroke-width="0.3">R</text><text x="32.8" fill="#d8e8d4" stroke="#d8e8d4" stroke-width="0.3">I</text><text x="49.2" fill="#d2eafa" stroke="#d2eafa" stroke-width="0.3">W</text><text x="57.4" fill="#d8e8d4" stroke="#d8e8d4" stroke-width="0.3">E</text><text x="65.6" fill="#d2eafa" stroke="#d2eafa" stroke-width="0.3">B</text><text x="73.8" fill="#fadcd4" stroke="#fadcd4" stroke-width="0.3">L</text><text x="82.0" fill="#eaf4cc" stroke="#eaf4cc" stroke-width="0.3">A</text><text x="90.2" fill="#eaf4cc" stroke="#eaf4cc" stroke-width="0.3">P</text><text x="98.4" fill="#d2eafa" stroke="#d2eafa" stroke-width="0.3">J</text><text x="106.6" fill="#fadcf6" stroke="#fadcf6" stroke-width="0.3">A</text><text x="120.0" fill="#fadcd4" stroke="#fadcd4" stroke-width="0.3">S</text><text x="128.2" fill="#fadcd4" stroke="#fadcd4" stroke-width="0.3">K</text><text x="136.4" fill="#eaf4cc" stroke="#eaf4cc" stroke-width="0.3">O</text><text x="144.6" fill="#d2eafa" stroke="#d2eafa" stroke-width="0.3">R</text><text x="152.8" fill="#d8e8d4" stroke="#d8e8d4" stroke-width="0.3">I</text><text x="169.2" fill="#d2eafa" stroke="#d2eafa" stroke-width="0.3">W</text><text x="177.4" fill="#d8e8d4" stroke="#d8e8d4" stroke-width="0.3">E</text><text x="185.6" fill="#d2eafa" stroke="#d2eafa" stroke-width="0.3">B</text><text x="193.8" fill="#fadcd4" stroke="#fadcd4" stroke-width="0.3">L</text><text x="202.0" fill="#eaf4cc" stroke="#eaf4cc" stroke-width="0.3">A</text><text x="210.2" fill="#eaf4cc" stroke="#eaf4cc" stroke-width="0.3">P</text><text x="218.4" fill="#d2eafa" stroke="#d2eafa" stroke-width="0.3">J</text><text x="226.6" fill="#fadcf6" stroke="#fadcf6" stroke-width="0.3">A</text></g><g transform="translate(0 82.0) skewX(12)"><text x="-120.0" fill="#d2eafa" stroke="#d2eafa" stroke-width="0.3">S</text><text x="-111.8" fill="#fadcf6" stroke="#fadcf6" stroke-width="0.3">K</text><text x="-103.6" fill="#eaf4cc" stroke="#eaf4cc" stroke-width="0.3">O</text><text x="-95.4" fill="#fadcf6" stroke="#fadcf6" stroke-width="0.3">R</text><text x="-87.2" fill="#d8e8d4" stroke="#d8e8d4" stroke-width="0.3">I</text><text x="-70.8" fill="#eaf4cc" stroke="#eaf4cc" stroke-width="0.3">W</text><text x="-62.6" fill="#fadcd4" stroke="#fadcd4" stroke-width="0.3">E</text><text x="-54.4" fill="#d8e8d4" stroke="#d8e8d4" stroke-width="0.3">B</text><text x="-46.2" fill="#d8e8d4" stroke="#d8e8d4" stroke-width="0.3">L</text><text x="-38.0" fill="#d2eafa" stroke="#d2eafa" stroke-width="0.3">A</text><text x="-29.8" fill="#fadcf6" stroke="#fadcf6" stroke-width="0.3">P</text><text x="-21.6" fill="#d2eafa" stroke="#d2eafa" stroke-width="0.3">J</text><text x="-13.4" fill="#d8e8d4" stroke="#d8e8d4" stroke-width="0.3">A</text><text x="0.0" fill="#d2eafa" stroke="#d2eafa" stroke-width="0.3">S</text><text x="8.2" fill="#fadcf6" stroke="#fadcf6" stroke-width="0.3">K</text><text x="16.4" fill="#eaf4cc" stroke="#eaf4cc" stroke-width="0.3">O</text><text x="24.6" fill="#fadcf6" stroke="#fadcf6" stroke-width="0.3">R</text><text x="32.8" fill="#d8e8d4" stroke="#d8e8d4" stroke-width="0.3">I</text><text x="49.2" fill="#eaf4cc" stroke="#eaf4cc" stroke-width="0.3">W</text><text x="57.4" fill="#fadcd4" stroke="#fadcd4" stroke-width="0.3">E</text><text x="65.6" fill="#d8e8d4" stroke="#d8e8d4" stroke-width="0.3">B</text><text x="73.8" fill="#d8e8d4" stroke="#d8e8d4" stroke-width="0.3">L</text><text x="82.0" fill="#d2eafa" stroke="#d2eafa" stroke-width="0.3">A</text><text x="90.2" fill="#fadcf6" stroke="#fadcf6" stroke-width="0.3">P</text><text x="98.4" fill="#d2eafa" stroke="#d2eafa" stroke-width="0.3">J</text><text x="106.6" fill="#d8e8d4" stroke="#d8e8d4" stroke-width="0.3">A</text><text x="120.0" fill="#d2eafa" stroke="#d2eafa" stroke-width="0.3">S</text><text x="128.2" fill="#fadcf6" stroke="#fadcf6" stroke-width="0.3">K</text><text x="136.4" fill="#eaf4cc" stroke="#eaf4cc" stroke-width="0.3">O</text><text x="144.6" fill="#fadcf6" stroke="#fadcf6" stroke-width="0.3">R</text><text x="152.8" fill="#d8e8d4" stroke="#d8e8d4" stroke-width="0.3">I</text><text x="169.2" fill="#eaf4cc" stroke="#eaf4cc" stroke-width="0.3">W</text><text x="177.4" fill="#fadcd4" stroke="#fadcd4" stroke-width="0.3">E</text><text x="185.6" fill="#d8e8d4" stroke="#d8e8d4" stroke-width="0.3">B</text><text x="193.8" fill="#d8e8d4" stroke="#d8e8d4" stroke-width="0.3">L</text><text x="202.0" fill="#d2eafa" stroke="#d2eafa" stroke-width="0.3">A</text><text x="210.2" fill="#fadcf6" stroke="#fadcf6" stroke-width="0.3">P</text><text x="218.4" fill="#d2eafa" stroke="#d2eafa" stroke-width="0.3">J</text><text x="226.6" fill="#d8e8d4" stroke="#d8e8d4" stroke-width="0.3">A</text></g></pattern></defs><rect x="140" y="70" width="568" height="585" fill="#fff"/><rect x="140" y="70" width="568" height="585" fill="url(#wm)"/></svg>
<div style="position:absolute;left:139px;top:69px;width:570px;height:1px;background:#404040"></div>
<div style="position:absolute;left:139px;top:69px;width:1px;height:587px;background:#404040"></div>
<div style="position:absolute;left:138px;top:70px;width:1px;height:586px;background:#e8e4dc"></div>
<div style="position:absolute;left:708px;top:70px;width:1px;height:586px;background:#a0a0a0"></div>
<div style="position:absolute;left:139px;top:655px;width:570px;height:1px;background:#a0a0a0"></div>
<div style="position:absolute;left:270px;top:195px;width:439px;height:1px;background:#101010"></div>
<div style="position:absolute;left:270px;top:196px;width:439px;height:22px;background:#aaa69e"></div>
<div class="t" style="left:277px;top:202px;color:#f4f4f4">IP Pool</div>
<div style="position:absolute;left:270px;top:218px;width:439px;height:24px;background:#d4d0c8"></div>
<div style="position:absolute;left:316px;top:222px;width:87px;height:20px;background:#c8c4bc;box-sizing:border-box;border-top:1px solid #e8e4dc;border-right:1px solid #a09c94"></div>
<div class="t" style="left:320px;top:226px;letter-spacing:-0.2px">Used Addresses</div>
<div style="position:absolute;left:275px;top:220px;width:41px;height:23px;background:#d4d0c8;box-sizing:border-box;border-top:1px solid #fff;border-left:1px solid #fff;border-right:1px solid #808080"></div>
<div class="t" style="left:282px;top:224px;">Pools</div>
<div style="position:absolute;left:316px;top:242px;width:393px;height:1px;background:#fff"></div>
<div style="position:absolute;left:275px;top:243px;width:434px;height:29px;background:#d4d0c8"></div>
<div style="position:absolute;left:277px;top:247px;width:23px;height:23px;border:1px solid #fff;box-sizing:border-box;"></div>
<div style="position:absolute;left:276px;top:246px;width:23px;height:23px;border:1px solid #808080;box-sizing:border-box;"></div>
<div style="position:absolute;left:303px;top:247px;width:23px;height:23px;border:1px solid #fff;box-sizing:border-box;"></div>
<div style="position:absolute;left:302px;top:246px;width:23px;height:23px;border:1px solid #808080;box-sizing:border-box;"></div>
<div style="position:absolute;left:335px;top:247px;width:23px;height:23px;border:1px solid #fff;box-sizing:border-box;"></div>
<div style="position:absolute;left:334px;top:246px;width:23px;height:23px;border:1px solid #808080;box-sizing:border-box;"></div>
<div style="position:absolute;left:367px;top:247px;width:23px;height:23px;border:1px solid #fff;box-sizing:border-box;"></div>
<div style="position:absolute;left:366px;top:246px;width:23px;height:23px;border:1px solid #808080;box-sizing:border-box;"></div>
<svg style="left:281px;top:252px" width="14" height="13" viewBox="0 0 14 13"><path d="M5 0.5 h3.5 v4 h4.5 v3.5 h-4.5 v4.5 h-3.5 v-4.5 h-4.5 v-3.5 h4.5z" fill="#0000f0" stroke="#000" stroke-width="1"/></svg>
<div class="t" style="left:293px;top:242px;color:#f00;font-family:'Liberation Sans';font-size:14px;line-height:14px;transform:scaleX(0.62);transform-origin:left top;-webkit-text-stroke:0.1px #f00">3</div>
<div style="position:absolute;left:308px;top:256px;width:13px;height:4px;box-sizing:border-box;border:1px solid #a0a0a0;border-right-color:#fff;border-bottom-color:#fff;background:#e8e4dc"></div>
<svg style="left:339px;top:251px" width="14" height="13" viewBox="0 0 14 13"><path d="M3.5 1.5 h9 v8 h-11 v-6z" fill="#e8e4dc" stroke="#a09c94" stroke-width="1"/><path d="M6 4 h2 M9 4 h2 M6 6.5 h2 M9 6.5 h2" stroke="#a09c94"/><path d="M1.5 3.5 h2 v-2" stroke="#a09c94" fill="none"/></svg>
<svg style="left:371px;top:251px" width="14" height="14" viewBox="0 0 14 14"><path d="M0.5 1 h13 l-4.5 5 v7 h-4 v-7z" fill="#7890c8" stroke="#000" stroke-width="1"/><path d="M2 1.5 h10" stroke="#c0d0f0"/></svg>
<div style="position:absolute;left:705px;top:251px;width:4px;height:18px;background:#fff;box-sizing:border-box;border:1px solid #808080;border-right:none"></div>
<div style="position:absolute;left:275px;top:218px;width:1px;height:323px;background:#d4d0c8"></div>
<div style="position:absolute;left:276px;top:272px;width:433px;height:18px;background:#d4d0c8;box-sizing:border-box;border-top:1px solid #808080"></div>
<div style="position:absolute;left:280px;top:273px;width:1px;height:16px;background:#808080"></div>
<div style="position:absolute;left:281px;top:273px;width:1px;height:16px;background:#fff"></div>
<div style="position:absolute;left:380px;top:273px;width:1px;height:16px;background:#808080"></div>
<div style="position:absolute;left:381px;top:273px;width:1px;height:16px;background:#fff"></div>
<div style="position:absolute;left:580px;top:273px;width:1px;height:16px;background:#808080"></div>
<div style="position:absolute;left:581px;top:273px;width:1px;height:16px;background:#fff"></div>
<div style="position:absolute;left:680px;top:273px;width:1px;height:16px;background:#808080"></div>
<div style="position:absolute;left:681px;top:273px;width:1px;height:16px;background:#fff"></div>
<div style="position:absolute;left:276px;top:289px;width:433px;height:1px;background:#808080"></div>
<div style="position:absolute;left:277px;top:273px;width:1px;height:16px;background:#fff"></div>
<div class="t" style="left:284px;top:276px;">Name</div>
<div class="t" style="left:383px;top:276px;">Addresses</div>
<div class="t" style="left:584px;top:276px;">Next Pool</div>
<svg style="left:370px;top:276px" width="9" height="9" viewBox="0 0 9 9"><path d="M4.5 0.5 L8.5 8.5 H0.5z" fill="none" stroke="#808080"/><path d="M0.5 8.5 H8.5 L4.5 0.5" fill="none" stroke="#fff"/></svg>
<div style="position:absolute;left:276px;top:272px;width:1px;height:263px;background:#808080"></div>
<div style="position:absolute;left:277px;top:515px;width:432px;height:1px;background:#808080"></div>
<div style="position:absolute;left:277px;top:516px;width:432px;height:19px;background:#d4d0c8"></div>
<div class="t" style="left:279px;top:518px;">3 items</div>
<div style="position:absolute;left:276px;top:535px;width:433px;height:1px;background:#f0ece4"></div>
<div style="position:absolute;left:275px;top:536px;width:434px;height:1px;background:#a09c94"></div>
<div style="position:absolute;left:275px;top:537px;width:434px;height:3px;background:#d4d0c8"></div>
<div style="position:absolute;left:275px;top:540px;width:434px;height:1px;background:#101010"></div>
<div style="position:absolute;left:280px;top:292px;width:422px;height:200px;background:#d4d0c8;box-sizing:border-box;border:1px solid #000"></div>
<div style="position:absolute;left:281px;top:293px;width:420px;height:198px;box-sizing:border-box;border-top:1px solid #fff;border-left:1px solid #fff;border-right:1px solid #a8a49c;border-bottom:1px solid #a8a49c"></div>
<div style="position:absolute;left:281px;top:293px;width:420px;height:22px;background:#4b4bc8"></div>
<div class="t" style="left:286px;top:299px;color:#fff">New IP Pool</div>
<div style="position:absolute;left:665px;top:297px;width:16px;height:15px;box-sizing:border-box;background:#d4d0c8;border-top:1px solid #fff;border-left:1px solid #fff;border-right:1px solid #404040;border-bottom:1px solid #404040;box-shadow:inset -1px -1px 0 #808080"></div>
<div style="position:absolute;left:682px;top:297px;width:16px;height:15px;box-sizing:border-box;background:#d4d0c8;border-top:1px solid #fff;border-left:1px solid #fff;border-right:1px solid #404040;border-bottom:1px solid #404040;box-shadow:inset -1px -1px 0 #808080"></div>
<div style="position:absolute;left:669px;top:300px;width:8px;height:8px;box-sizing:border-box;border:1px solid #000;border-top-width:2px"></div>
<svg style="left:686px;top:300px" width="8" height="8" viewBox="0 0 8 8"><path d="M0.8 0.8 L7.2 7.2 M7.2 0.8 L0.8 7.2" stroke="#000" stroke-width="1.7"/></svg>
<div class="t" style="left:240px;top:325px;width:101px;text-align:right;color:#0000ff;letter-spacing:-0.45px">Name:</div>
<div class="t" style="left:240px;top:351px;width:101px;text-align:right;color:#0000ff;letter-spacing:-0.4px">Addresses:</div>
<div class="t" style="left:240px;top:377px;width:101px;text-align:right;letter-spacing:-0.35px">Next Pool:</div>
<div style="position:absolute;left:349px;top:323px;width:265px;height:17px;background:#fff"></div>
<div style="position:absolute;left:348px;top:322px;width:266px;height:18px;box-sizing:border-box;border:1px solid #808080"></div>
<div style="position:absolute;left:614px;top:323px;width:1px;height:18px;background:#fff"></div>
<div style="position:absolute;left:349px;top:340px;width:266px;height:1px;background:#fff"></div>
<div style="position:absolute;left:349px;top:349px;width:246px;height:17px;background:#fff"></div>
<div style="position:absolute;left:348px;top:348px;width:247px;height:18px;box-sizing:border-box;border:1px solid #808080"></div>
<div style="position:absolute;left:595px;top:349px;width:1px;height:18px;background:#fff"></div>
<div style="position:absolute;left:349px;top:366px;width:247px;height:1px;background:#fff"></div>
<div style="position:absolute;left:349px;top:375px;width:228px;height:17px;background:#fff"></div>
<div style="position:absolute;left:348px;top:374px;width:229px;height:18px;box-sizing:border-box;border:1px solid #808080"></div>
<div style="position:absolute;left:577px;top:375px;width:1px;height:18px;background:#fff"></div>
<div style="position:absolute;left:349px;top:392px;width:229px;height:1px;background:#fff"></div>
<div class="t" style="left:352px;top:325px;letter-spacing:-0.1px">dhcp-pool1</div>
<div class="t" style="left:352px;top:351px;letter-spacing:-0.15px">192.168.5.100-192.168.5.250</div>
<div class="t" style="left:352px;top:377px;">none</div>
<div style="position:absolute;left:579px;top:375px;width:17px;height:18px;border:1px solid #fff;box-sizing:border-box;"></div>
<div style="position:absolute;left:578px;top:374px;width:17px;height:18px;border:1px solid #808080;box-sizing:border-box;"></div>
<div style="position:absolute;left:584px;top:378px;width:7px;height:1px;background:#000"></div>
<svg style="left:583px;top:380px" width="9" height="8" viewBox="0 0 9 8"><path d="M3 0 h3 v3 h2.5 L4.5 7.5 L0.5 3 H3z" fill="#000"/></svg>
<svg style="left:599px;top:350px" width="11" height="14" viewBox="0 0 11 14"><path d="M0.5 6 L5.5 0.8 L10.5 6z" fill="#8a9080"/><path d="M0.5 7.5 L10.5 7.5 L5.5 13z" fill="#000"/></svg>
<svg style="left:599px;top:379px" width="11" height="7" viewBox="0 0 11 7"><path d="M0.5 6.5 L5.5 0.8 L10.5 6.5z" fill="#000"/></svg>
<div style="position:absolute;left:630px;top:322px;width:63px;height:23px;border:1px solid #fff;box-sizing:border-box;"></div>
<div style="position:absolute;left:629px;top:321px;width:63px;height:23px;border:1px solid #000;box-sizing:border-box;"></div>
<div class="t" style="left:629px;top:326px;width:64px;text-align:center">OK</div>
<div style="position:absolute;left:630px;top:348px;width:63px;height:23px;border:1px solid #fff;box-sizing:border-box;"></div>
<div style="position:absolute;left:629px;top:347px;width:63px;height:23px;border:1px solid #808080;box-sizing:border-box;"></div>
<div class="t" style="left:629px;top:352px;width:64px;text-align:center">Cancel</div>
<div style="position:absolute;left:630px;top:374px;width:63px;height:23px;border:1px solid #fff;box-sizing:border-box;"></div>
<div style="position:absolute;left:629px;top:373px;width:63px;height:23px;border:1px solid #808080;box-sizing:border-box;"></div>
<div class="t" style="left:629px;top:378px;width:64px;text-align:center">Apply</div>
<div style="position:absolute;left:630px;top:406px;width:63px;height:23px;border:1px solid #fff;box-sizing:border-box;"></div>
<div style="position:absolute;left:629px;top:405px;width:63px;height:23px;border:1px solid #808080;box-sizing:border-box;"></div>
<div class="t" style="left:629px;top:410px;width:64px;text-align:center">Comment</div>
<div style="position:absolute;left:630px;top:432px;width:63px;height:23px;border:1px solid #fff;box-sizing:border-box;"></div>
<div style="position:absolute;left:629px;top:431px;width:63px;height:23px;border:1px solid #808080;box-sizing:border-box;"></div>
<div class="t" style="left:629px;top:436px;width:64px;text-align:center">Copy</div>
<div style="position:absolute;left:630px;top:458px;width:63px;height:23px;border:1px solid #fff;box-sizing:border-box;"></div>
<div style="position:absolute;left:629px;top:457px;width:63px;height:23px;border:1px solid #808080;box-sizing:border-box;"></div>
<div class="t" style="left:629px;top:462px;width:64px;text-align:center">Remove</div>
<div class="t" style="left:559px;top:325px;color:#f00;font-family:'Liberation Sans';font-size:14px;line-height:14px;transform:scaleX(0.66);transform-origin:left top;-webkit-text-stroke:0.1px #f00">4</div>
<div class="t" style="left:560px;top:347px;color:#f00;font-family:'Liberation Sans';font-size:14px;line-height:14px;transform:scaleX(0.66);transform-origin:left top;-webkit-text-stroke:0.1px #f00">5</div>
<div class="t" style="left:677px;top:323px;color:#f00;font-family:'Liberation Sans';font-size:14px;line-height:14px;transform:scaleX(0.66);transform-origin:left top;-webkit-text-stroke:0.1px #f00">6</div>
<div style="position:absolute;left:139px;top:104px;width:136px;height:554px;background:#d4d0c8;box-sizing:border-box;border-right:1px solid #404040;border-bottom:1px solid #404040"></div>
<div style="position:absolute;left:140px;top:105px;width:134px;height:552px;box-sizing:border-box;border-top:1px solid #fff;border-left:1px solid #fff;border-right:1px solid #808080;border-bottom:1px solid #808080"></div>
<div style="position:absolute;left:143px;top:128px;width:129px;height:1px;background:#bcb8b0"></div>
<div class="t" style="left:151px;top:111px;">ARP</div>
<div style="position:absolute;left:143px;top:150px;width:129px;height:1px;background:#bcb8b0"></div>
<div class="t" style="left:151px;top:133px;">Accounting</div>
<div style="position:absolute;left:143px;top:172px;width:129px;height:1px;background:#bcb8b0"></div>
<div class="t" style="left:151px;top:155px;">Addresses</div>
<div style="position:absolute;left:143px;top:194px;width:129px;height:1px;background:#bcb8b0"></div>
<div class="t" style="left:151px;top:177px;">Cloud</div>
<div style="position:absolute;left:143px;top:216px;width:129px;height:1px;background:#bcb8b0"></div>
<div class="t" style="left:151px;top:199px;">DHCP Client</div>
<div style="position:absolute;left:143px;top:238px;width:129px;height:1px;background:#bcb8b0"></div>
<div class="t" style="left:151px;top:221px;">DHCP Relay</div>
<div style="position:absolute;left:143px;top:260px;width:129px;height:1px;background:#bcb8b0"></div>
<div class="t" style="left:151px;top:243px;">DHCP Server</div>
<div style="position:absolute;left:143px;top:282px;width:129px;height:1px;background:#bcb8b0"></div>
<div class="t" style="left:151px;top:265px;">DNS</div>
<div style="position:absolute;left:143px;top:304px;width:129px;height:1px;background:#bcb8b0"></div>
<div class="t" style="left:151px;top:287px;">Firewall</div>
<div style="position:absolute;left:143px;top:326px;width:129px;height:1px;background:#bcb8b0"></div>
<div class="t" style="left:151px;top:309px;">Hotspot</div>
<div style="position:absolute;left:143px;top:348px;width:129px;height:1px;background:#bcb8b0"></div>
<div class="t" style="left:151px;top:331px;">IPsec</div>
<div style="position:absolute;left:143px;top:370px;width:129px;height:1px;background:#bcb8b0"></div>
<div class="t" style="left:151px;top:353px;">Kid Control</div>
<div style="position:absolute;left:143px;top:392px;width:129px;height:1px;background:#bcb8b0"></div>
<div class="t" style="left:151px;top:375px;">Neighbors</div>
<div style="position:absolute;left:143px;top:414px;width:129px;height:1px;background:#bcb8b0"></div>
<div class="t" style="left:151px;top:397px;">Packing</div>
<div style="position:absolute;left:142px;top:414px;width:131px;height:23px;box-sizing:border-box;border-top:1px solid #808080;border-left:1px solid #808080;border-right:1px solid #fff;border-bottom:1px solid #fff"></div>
<div class="t" style="left:151px;top:419px;">Pool</div>
<div style="position:absolute;left:143px;top:458px;width:129px;height:1px;background:#bcb8b0"></div>
<div class="t" style="left:151px;top:441px;">Routes</div>
<div style="position:absolute;left:143px;top:480px;width:129px;height:1px;background:#bcb8b0"></div>
<div class="t" style="left:151px;top:463px;">SMB</div>
<div style="position:absolute;left:143px;top:502px;width:129px;height:1px;background:#bcb8b0"></div>
<div class="t" style="left:151px;top:485px;">SNMP</div>
<div style="position:absolute;left:143px;top:524px;width:129px;height:1px;background:#bcb8b0"></div>
<div class="t" style="left:151px;top:507px;">Services</div>
<div style="position:absolute;left:143px;top:546px;width:129px;height:1px;background:#bcb8b0"></div>
<div class="t" style="left:151px;top:529px;">Settings</div>
<div style="position:absolute;left:143px;top:568px;width:129px;height:1px;background:#bcb8b0"></div>
<div class="t" style="left:151px;top:551px;">Socks</div>
<div style="position:absolute;left:143px;top:590px;width:129px;height:1px;background:#bcb8b0"></div>
<div class="t" style="left:151px;top:573px;">TFTP</div>
<div style="position:absolute;left:143px;top:612px;width:129px;height:1px;background:#bcb8b0"></div>
<div class="t" style="left:151px;top:595px;">Traffic Flow</div>
<div style="position:absolute;left:143px;top:634px;width:129px;height:1px;background:#bcb8b0"></div>
<div class="t" style="left:151px;top:617px;">UPnP</div>
<div class="t" style="left:151px;top:639px;">Web Proxy</div>
<div class="t" style="left:223px;top:416px;color:#f00;font-family:'Liberation Sans';font-size:14px;line-height:14px;transform:scaleX(0.66);transform-origin:left top;-webkit-text-stroke:0.1px #f00">2</div>
</body></html>
